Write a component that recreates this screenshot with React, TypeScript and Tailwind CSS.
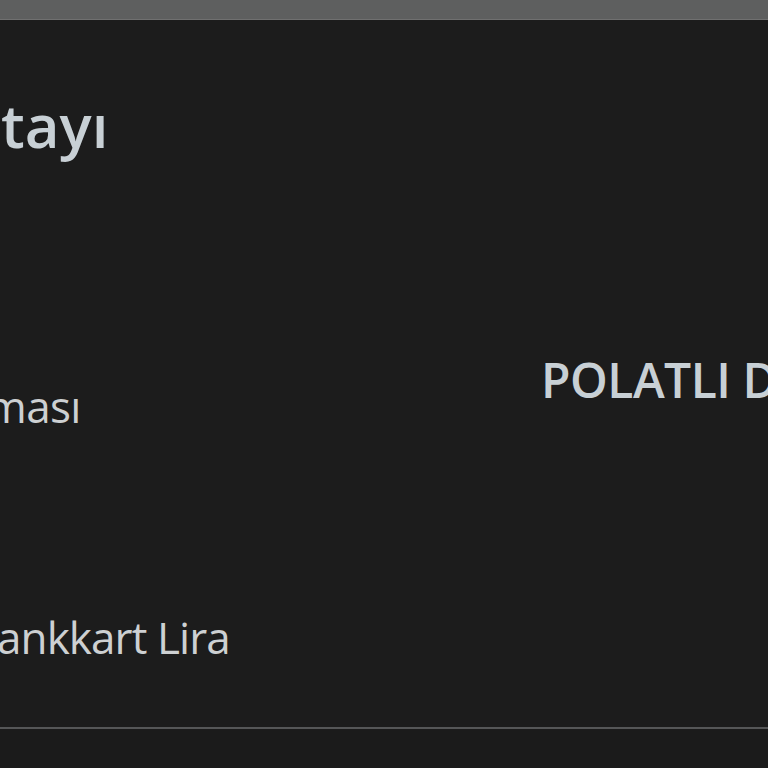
export default function App() {
  return (
    <div
      className="w-[768px] h-[768px] overflow-hidden bg-[#1c1c1c] flex flex-col"
      style={{ fontFamily: '"Open Sans", "Noto Sans", sans-serif' }}
    >
      <div className="h-[20px] shrink-0 bg-[#5e5f5f] border-b border-[#707070]" />
      <div className="h-[707px] shrink-0 flex flex-row">
        <div className="w-[541px] shrink-0 flex flex-col overflow-hidden">
          <div className="mt-[75px] ml-[1px] text-[60px] leading-none font-semibold text-[#c8d0d5] whitespace-nowrap">
            tayı
          </div>
          <div className="mt-[229px] -ml-[14px] text-[44px] leading-none tracking-[-0.6px] text-[#cdd0d2] whitespace-nowrap">
            ması
          </div>
          <div className="mt-[187px] -ml-[3px] text-[44px] leading-none tracking-[-0.9px] text-[#cdd0d2] whitespace-nowrap">
            ankkart Lira
          </div>
        </div>
        <div className="flex-1 overflow-hidden">
          <div className="mt-[336px] text-[48px] leading-none font-semibold tracking-[-0.5px] text-[#c8d0d5] whitespace-nowrap">
            POLATLI DİKMEN
          </div>
        </div>
      </div>
      <div className="h-[2px] shrink-0 bg-[#555657]" />
      <div className="flex-1 bg-[#1b1b1b]" />
    </div>
  );
}
